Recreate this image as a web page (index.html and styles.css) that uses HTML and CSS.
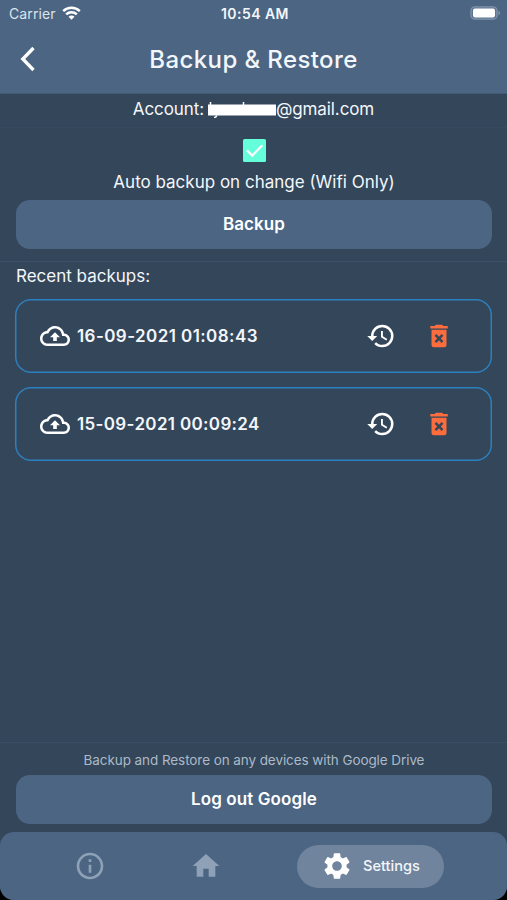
FILE: index.html
```html
<!DOCTYPE html>
<html lang="en">
<head>
<meta charset="utf-8">
<title>Backup &amp; Restore</title>
<link rel="stylesheet" href="styles.css">
</head>
<body>
<svg class="defs" width="0" height="0">
  <symbol id="cloud" viewBox="0 0 24 24"><path d="M19.35 10.04C18.67 6.59 15.64 4 12 4 9.11 4 6.6 5.64 5.35 8.04 2.34 8.36 0 10.91 0 14c0 3.31 2.69 6 6 6h13c2.76 0 5-2.24 5-5 0-2.64-2.05-4.78-4.65-4.96zM19 18H6c-2.21 0-4-1.79-4-4 0-2.05 1.53-3.76 3.56-3.97l1.07-.11.5-.95C8.08 7.14 9.94 6 12 6c2.62 0 4.88 1.86 5.39 4.43l.3 1.5 1.53.11c1.56.1 2.78 1.41 2.78 2.96 0 1.65-1.35 3-3 3zM8 13h2.55v3h2.9v-3H16l-4-4z"/></symbol>
  <symbol id="history" viewBox="0 0 24 24"><path d="M13.5 8H12v5l4.28 2.54.72-1.21-3.5-2.08V8M13 3a9 9 0 0 0-9 9H1l3.96 4.03L9 12H6a7 7 0 0 1 7-7 7 7 0 0 1 7 7 7 7 0 0 1-7 7c-1.93 0-3.68-.79-4.94-2.06l-1.42 1.42A8.9 8.9 0 0 0 13 21a9 9 0 0 0 9-9 9 9 0 0 0-9-9"/></symbol>
  <symbol id="trash" viewBox="0 0 24 24"><path d="M6 19a2 2 0 0 0 2 2h8a2 2 0 0 0 2-2V7H6v12m2.46-7.12 1.41-1.41L12 12.59l2.12-2.12 1.41 1.41L13.41 14l2.12 2.12-1.41 1.41L12 15.41l-2.12 2.12-1.41-1.41L10.59 14l-2.13-2.12M15.5 4l-1-1h-5l-1 1H5v2h14V4h-3.5z"/></symbol>
</svg>
<main class="screen">
  <header class="header">
    <div class="status">
      <div class="carrier"><span>Carrier</span>
        <svg width="19" height="14" viewBox="0 0 19 14" fill="none" stroke="#fff" stroke-width="2.5"><path d="M1.2 5.1a12 12 0 0 1 16.6 0M4.2 8.3a7.7 7.7 0 0 1 10.6 0"/><path d="M9.5 13.7 6.5 10.7a4.2 4.2 0 0 1 6 0z" fill="#fff" stroke="none"/></svg>
      </div>
      <div class="clock">10:54 AM</div>
      <div class="battery">
        <svg width="31" height="14" viewBox="0 0 31 14"><rect x="1" y=".8" width="26" height="12.4" rx="3.8" fill="#5d7490" stroke="#8193aa" stroke-width="1.3"/><rect x="3" y="2.6" width="22" height="8.8" rx="1.8" fill="#fff"/><path d="M28.4 4.8q1.8.6 1.8 2.2t-1.8 2.2z" fill="#8193aa"/></svg>
      </div>
    </div>
    <div class="titlebar">
      <svg class="back" width="18" height="26" viewBox="0 0 18 26" fill="none" stroke="#fff" stroke-width="3.3"><path d="M15.5 2 4.8 13l10.7 11"/></svg>
      <h1 class="title">Backup &amp; Restore</h1>
    </div>
  </header>
  <section class="account">
    <span>Account:</span>
    <svg class="redacted" width="68" height="18" viewBox="0 0 68 18"><path d="M0 4.5h68v11H0z" fill="#fff"/><path d="M2.5 2v3M35.5 2v3M8.8 15.5q-.8 2-2.8 2" fill="none" stroke="#fff" stroke-width="1.5"/></svg>
    <span class="domain">@gmail.com</span>
  </section>
  <section class="auto">
    <svg class="check" width="23" height="23" viewBox="0 0 23 23"><rect width="23" height="23" rx="1.5" fill="#64ffda"/><path d="M4 11.4l5.2 5.2L19.3 6.3" fill="none" stroke="#fff" stroke-width="2.2"/></svg>
    <div class="auto-label">Auto backup on change (Wifi Only)</div>
    <button class="button backup">Backup</button>
  </section>
  <section class="recent">
    <h2 class="recent-title">Recent backups:</h2>
    <article class="card"><svg class="icon"><use href="#cloud"/></svg><span class="date">16-09-2021 01:08:43</span><svg class="icon"><use href="#history"/></svg><svg class="icon trash"><use href="#trash"/></svg></article>
    <article class="card"><svg class="icon"><use href="#cloud"/></svg><span class="date second">15-09-2021 00:09:24</span><svg class="icon"><use href="#history"/></svg><svg class="icon trash"><use href="#trash"/></svg></article>
  </section>
  <section class="drive">
    <div class="hint">Backup and Restore on any devices with Google Drive</div>
    <button class="button logout">Log out Google</button>
  </section>
  <nav class="nav">
    <svg class="nav-icon info" viewBox="0 0 24 24"><path d="M11 7h2v2h-2zm0 4h2v6h-2zm1-9C6.48 2 2 6.48 2 12s4.48 10 10 10 10-4.48 10-10S17.52 2 12 2zm0 18c-4.41 0-8-3.59-8-8s3.59-8 8-8 8 3.59 8 8-3.59 8-8 8z"/></svg>
    <svg class="nav-icon home" viewBox="0 0 24 24"><path d="M10 20v-6h4v6h5v-8h3L12 3 2 12h3v8z"/></svg>
    <div class="pill">
      <svg class="gear" viewBox="0 0 24 24"><path d="M19.14 12.94c.04-.3.06-.61.06-.94 0-.32-.02-.64-.07-.94l2.03-1.58c.18-.14.23-.41.12-.61l-1.92-3.32c-.12-.22-.37-.29-.59-.22l-2.39.96c-.5-.38-1.03-.7-1.62-.94l-.36-2.54c-.04-.24-.24-.41-.48-.41h-3.84c-.24 0-.43.17-.47.41l-.36 2.54c-.59.24-1.13.57-1.62.94l-2.39-.96c-.22-.08-.47 0-.59.22L2.74 8.87c-.12.21-.08.47.12.61l2.03 1.58c-.05.3-.09.63-.09.94s.02.64.07.94l-2.03 1.58c-.18.14-.23.41-.12.61l1.92 3.32c.12.22.37.29.59.22l2.39-.96c.5.38 1.03.7 1.62.94l.36 2.54c.05.24.24.41.48.41h3.84c.24 0 .44-.17.47-.41l.36-2.54c.59-.24 1.13-.56 1.62-.94l2.39.96c.22.08.47 0 .59-.22l1.92-3.32c.12-.22.07-.47-.12-.61l-2.01-1.58zM12 15.6c-1.98 0-3.6-1.62-3.6-3.6s1.62-3.6 3.6-3.6 3.6 1.62 3.6 3.6-1.62 3.6-3.6 3.6z"/></svg>
      <span>Settings</span>
    </div>
  </nav>
</main>
</body>
</html>
```
FILE: styles.css
```css
* { box-sizing: border-box; }
body { margin: 0; background: #000; font-family: Inter, "Liberation Sans", sans-serif; color: #f3f6fa; }
svg { display: block; flex: none; }
.defs { position: absolute; }
.screen { width: 507px; height: 900px; display: flex; flex-direction: column; background: #33465a; border-radius: 0 0 14px 14px; overflow: hidden; }
.header { height: 94px; background: #4b6582; border-bottom: 1px solid #435a74; }
.status { height: 26px; display: grid; grid-template-columns: 1fr auto 1fr; align-items: center; padding: 0 6px 0 9px; font-size: 14px; }
.carrier { display: flex; align-items: center; gap: 6px; color: #dce4ed; letter-spacing: .1px; }
.clock { font-weight: 600; font-size: 14px; letter-spacing: .45px; padding-top: 1px; }
.battery { justify-self: end; }
.titlebar { height: 66px; display: flex; align-items: center; padding: 0 18px; }
.title { flex: 1; margin: 0 18px 0 0; text-align: center; font-size: 24px; font-weight: 500; letter-spacing: .4px; }
.account { height: 34px; display: flex; justify-content: center; align-items: flex-start; font-size: 17px; line-height: 30px; border-bottom: 1px solid #364a60; letter-spacing: -.1px; }
.redacted { margin: 6px 0 0 4px; }
.auto { height: 134px; padding: 11px 15px 0 16px; display: flex; flex-direction: column; align-items: center; border-bottom: 1px solid #3c5067; font-size: 17px; }
.auto-label { line-height: 24px; margin: 8px 0 6px; white-space: nowrap; }
.button { width: 100%; height: 49px; border: 0; border-radius: 14px; background: #4b6582; color: #fff; font: 600 17px Inter, "Liberation Sans", sans-serif; letter-spacing: .1px; padding: 0 0 1px; }
.recent { flex: 1; padding: 0 15px; }
.recent-title { margin: 2px 0 10px 1px; font-size: 17px; line-height: 25px; font-weight: 400; }
.card { height: 74px; margin-bottom: 14px; padding: 0 38px 1px 25px; display: flex; align-items: center; box-shadow: inset 0 0 0 1.5px #2d7fbd; border-radius: 16px; }
.icon { width: 30px; height: 30px; fill: #fff; }
.date { flex: 1; margin-left: 7px; font-size: 17px; font-weight: 600; letter-spacing: .42px; }
.second { letter-spacing: .34px; }
.trash { margin-left: 28px; fill: #fb6d3c; }
.drive { height: 90px; padding: 6px 15px 0 16px; border-top: 1px solid #3a4e64; }
.hint { margin-bottom: 4px; text-align: center; font-size: 13.5px; letter-spacing: -.08px; line-height: 22px; color: #adb9c7; }
.nav { height: 68px; display: flex; align-items: center; background: #4b6582; border-radius: 14px 14px 0 0; }
.nav-icon { width: 32px; height: 32px; fill: #8ea1b7; }
.info { margin-left: 74px; }
.home { margin-left: 84px; }
.pill { width: 147px; height: 43px; margin-left: 75px; padding-left: 24px; display: flex; align-items: center; gap: 10px; border-radius: 22px; background: #70849d; font-size: 14.6px; font-weight: 500; }
.gear { width: 32px; height: 32px; fill: #fff; }
```
